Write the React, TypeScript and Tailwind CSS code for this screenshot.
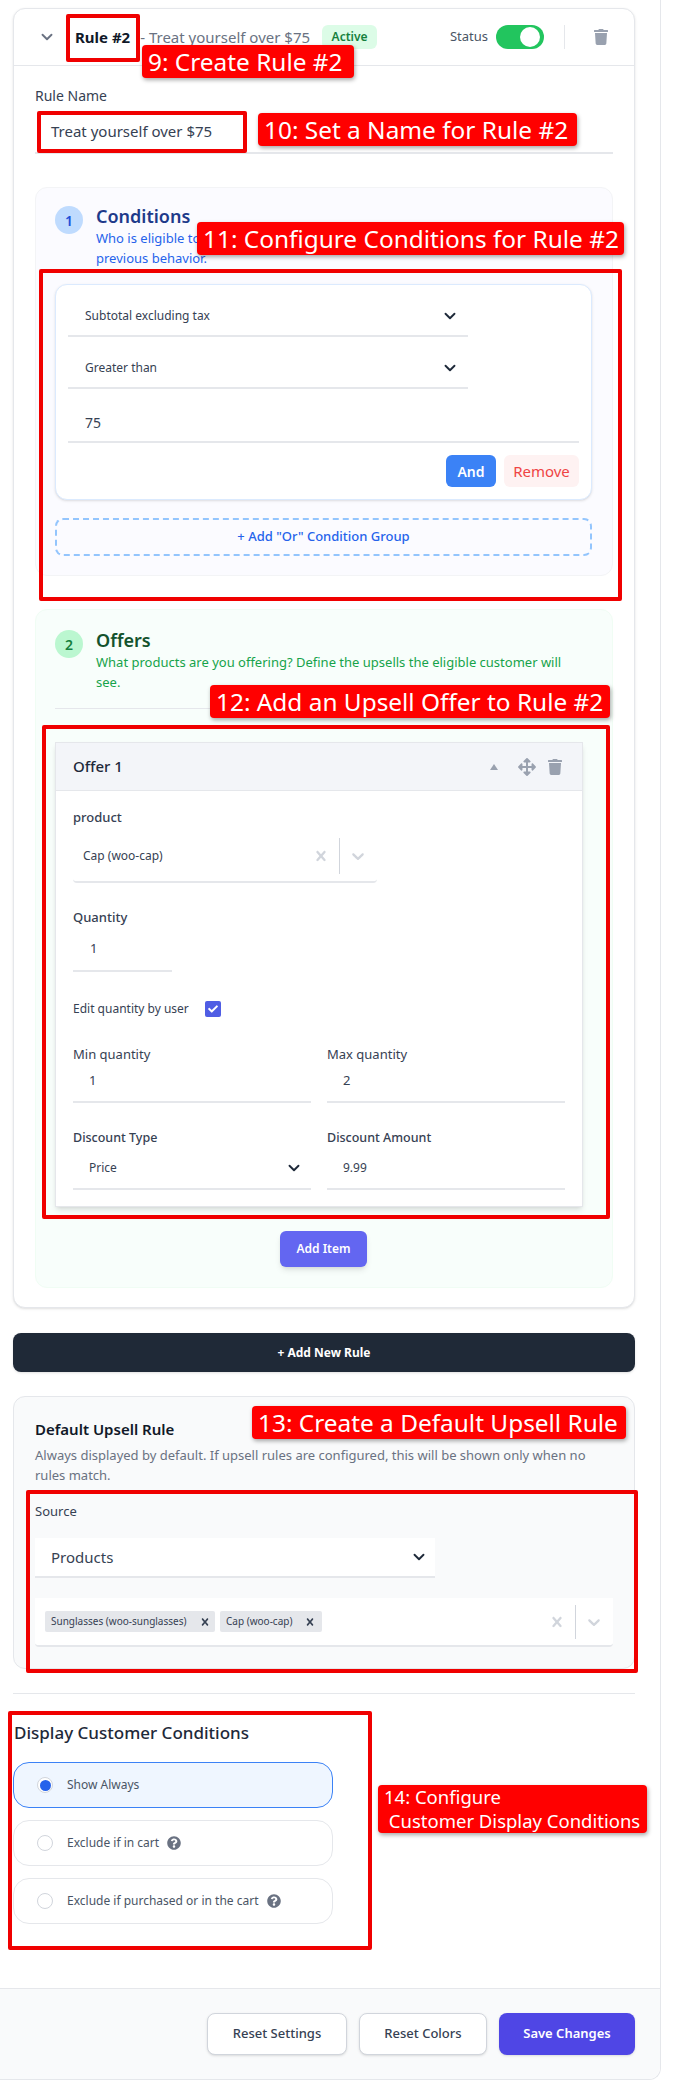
import { ChevronDown } from 'lucide-react';
import { FaArrowsAlt, FaCheck, FaQuestionCircle, FaTrash } from 'react-icons/fa';

const labelClass = 'block text-[13px] leading-5 text-gray-700';

function SelectCross({ className }: { className: string }) {
    return (
        <svg viewBox="0 0 20 20" fill="currentColor" className={className}>
            <path d="M14.348 14.849c-0.469 0.469-1.229 0.469-1.697 0l-2.651-3.030-2.651 3.029c-0.469 0.469-1.229 0.469-1.697 0-0.469-0.469-0.469-1.229 0-1.697l2.758-3.15-2.759-3.152c-0.469-0.469-0.469-1.228 0-1.697s1.228-0.469 1.697 0l2.652 3.031 2.651-3.031c0.469-0.469 1.228-0.469 1.697 0s0.469 1.229 0 1.697l-2.758 3.152 2.758 3.15c0.469 0.469 0.469 1.229 0 1.698z" />
        </svg>
    );
}

function SelectChevron({ className }: { className: string }) {
    return (
        <svg viewBox="0 0 20 20" fill="currentColor" className={className}>
            <path d="M4.516 7.548c0.436-0.446 1.043-0.481 1.576 0l3.908 3.747 3.908-3.747c0.533-0.481 1.141-0.446 1.574 0 0.436 0.445 0.408 1.197 0 1.615-0.406 0.418-4.695 4.502-4.695 4.502-0.217 0.223-0.502 0.335-0.787 0.335s-0.57-0.112-0.789-0.335c0 0-4.287-4.084-4.695-4.502s-0.436-1.17 0-1.615z" />
        </svg>
    );
}

function ConditionSelect({ text }: { text: string }) {
    return (
        <div className="flex h-10 w-[400px] items-center justify-between border-b-2 border-gray-200 pr-[9px] pl-[17px] text-[12px] text-gray-700">
            <span>{text}</span>
            <ChevronDown className="h-[18px] w-[18px] text-gray-800" strokeWidth={2.5} />
        </div>
    );
}

function Step({ n, circle, title, titleColor, desc, descColor }: { n: string; circle: string; title: string; titleColor: string; desc: string; descColor: string }) {
    return (
        <div className="flex gap-[13px]">
            <div className={`mt-[2px] flex h-7 w-7 shrink-0 items-center justify-center rounded-full text-[14px] font-semibold ${circle}`}>{n}</div>
            <div>
                <h3 className={`text-[18px] leading-6 font-semibold ${titleColor}`}>{title}</h3>
                <p className={`max-w-[480px] text-[13px] leading-5 ${descColor}`}>{desc}</p>
            </div>
        </div>
    );
}

function RadioCard({ text, active, help }: { text: string; active?: boolean; help?: boolean }) {
    return (
        <div className={`flex h-[46px] items-center rounded-2xl border pl-[23px] text-[12px] text-gray-600 ${active ? 'border-[#3b82f6] bg-[#eff6ff]' : 'border-gray-200 bg-white'}`}>
            {active ? (
                <span className="flex h-4 w-4 items-center justify-center rounded-full border border-gray-300 bg-white">
                    <span className="h-[11px] w-[11px] rounded-full bg-[#2563eb]" />
                </span>
            ) : (
                <span className="h-4 w-4 rounded-full border border-gray-300 bg-white" />
            )}
            <span className="ml-[14px]">{text}</span>
            {help && <FaQuestionCircle className="ml-2 h-[14px] w-[14px] text-gray-500" />}
        </div>
    );
}

function RedBox({ className }: { className: string }) {
    return <div className={`absolute rounded-[2px] border-4 border-[#f00000] ${className}`} />;
}

function RedLabel({ className, children }: { className: string; children: React.ReactNode }) {
    return <div className={`absolute rounded-[4px] bg-[#ff0000] pl-[6px] whitespace-pre text-white shadow-[1px_2px_4px_rgba(0,0,0,0.35)] ${className}`}>{children}</div>;
}

export default function App() {
    return (
        <div className="relative min-h-[2085px] w-[677px] bg-white font-['Noto_Sans',sans-serif]">
            <div className="w-[661px] rounded-br-xl border-r border-b border-gray-200">
                <div className="pt-2 pr-[25px] pl-[13px]">
                    {/* Rule card */}
                    <div className="rounded-xl border border-gray-200 bg-white shadow-sm">
                        <div className="flex h-[57px] items-center border-b border-gray-200 pr-[26px] pl-6">
                            <ChevronDown className="h-[18px] w-[18px] text-gray-500" strokeWidth={2.5} />
                            <span className="ml-[19px] text-[15px] font-bold text-gray-900">Rule #2</span>
                            <span className="ml-[10px] text-[15px] text-gray-500">- Treat yourself over $75</span>
                            <span className="ml-3 flex h-6 w-[55px] items-center justify-center rounded-md bg-[#dcfce7] text-[12px] font-semibold text-[#15803d]">Active</span>
                            <span className="ml-auto text-[13px] text-gray-600">Status</span>
                            <div className="ml-2 flex h-6 w-12 items-center justify-end rounded-full bg-[#22c55e] pr-1">
                                <div className="h-5 w-5 rounded-full bg-white" />
                            </div>
                            <div className="mr-[29px] ml-[20px] h-6 border-l border-gray-200" />
                            <FaTrash className="h-4 w-[14px] text-gray-400" />
                        </div>

                        <div className="px-[21px] pt-[20px] pb-[19px]">
                            <label className="block text-[14px] leading-5 text-gray-700">Rule Name</label>
                            <div className="flex h-12 w-full items-center border-b-2 border-gray-200 pt-[5px] pl-4 text-[15px] text-gray-700">Treat yourself over $75</div>

                            {/* Conditions */}
                            <section className="mt-[33px] rounded-xl border border-gray-100 bg-[#fbfbff] pt-[16px] pr-5 pb-[19px] pl-[19px]">
                                <Step
                                    n="1"
                                    circle="bg-[#bfdbfe] text-[#1d4ed8]"
                                    title="Conditions"
                                    titleColor="text-[#1e3a8a]"
                                    desc="Who is eligible to see these upsells? Target based on their cart contents or previous behavior."
                                    descColor="text-[#2563eb]"
                                />
                                <div className="mt-4 flex flex-col rounded-xl border border-[#dbeafe] bg-white px-3 py-3 shadow-sm">
                                    <ConditionSelect text="Subtotal excluding tax" />
                                    <div className="mt-3">
                                        <ConditionSelect text="Greater than" />
                                    </div>
                                    <div className="mt-[14px] flex h-10 items-center border-b-2 border-gray-200 pl-[17px] text-[14px] text-gray-700">75</div>
                                    <div className="mt-3 flex justify-end gap-2">
                                        <button className="h-8 w-[50px] rounded-md bg-[#3b82f6] text-[14px] font-semibold text-white">And</button>
                                        <button className="h-8 w-[75px] rounded-md bg-[#fef2f2] text-[15px] text-[#ef4444]">Remove</button>
                                    </div>
                                </div>
                                <button className="mt-[18px] h-[38px] w-full rounded-lg border-2 border-dashed border-[#93c5fd] text-[13px] font-medium text-[#2563eb]">+ Add "Or" Condition Group</button>
                            </section>

                            {/* Offers */}
                            <section className="mt-[33px] rounded-xl border border-[#f0fdf4] bg-[#f8fefb] pt-[18px] pr-5 pb-5 pl-[19px]">
                                <Step
                                    n="2"
                                    circle="bg-[#bbf7d0] text-[#15803d]"
                                    title="Offers"
                                    titleColor="text-[#14532d]"
                                    desc="What products are you offering? Define the upsells the eligible customer will see."
                                    descColor="text-[#16a34a]"
                                />
                                <div className="mt-4 border-t border-gray-200" />

                                <div className="mt-[33px] w-[528px] border border-gray-200 bg-white shadow-md">
                                    <div className="flex h-12 items-center border-b border-gray-200 bg-[#f3f5f9] pr-5 pl-[17px]">
                                        <span className="text-[15px] font-medium text-gray-800">Offer 1</span>
                                        <div className="ml-auto flex items-center text-gray-400">
                                            <span className="mr-[20px] h-0 w-0 border-x-[4px] border-b-[6px] border-x-transparent border-b-gray-400" />
                                            <FaArrowsAlt className="mr-[12px] h-[18px] w-[18px]" />
                                            <FaTrash className="h-4 w-[14px]" />
                                        </div>
                                    </div>
                                    <div className="px-[17px] pt-4 pb-4">
                                        <label className={`${labelClass} font-medium`}>product</label>
                                        <div className="mt-1 flex h-[52px] w-[304px] items-center rounded-b border-b-2 border-gray-200 pl-[10px] text-[12px] text-gray-700">
                                            <span>Cap (woo-cap)</span>
                                            <SelectCross className="ml-auto h-5 w-5 text-gray-300" />
                                            <div className="mx-2 h-9 border-l border-gray-300" />
                                            <SelectChevron className="mr-[9px] h-5 w-5 text-gray-300" />
                                        </div>

                                        <label className={`mt-6 ${labelClass} font-medium`}>Quantity</label>
                                        <div className="flex h-[45px] w-[99px] items-center border-b-2 border-gray-200 pl-[17px] text-[13px] text-gray-700">1</div>

                                        <div className="mt-[27px] flex h-5 items-center">
                                            <span className="text-[12px] text-gray-700">Edit quantity by user</span>
                                            <span className="ml-[16px] flex h-4 w-4 items-center justify-center rounded-[2px] bg-[#4f5de4] text-white">
                                                <FaCheck className="h-[10px] w-[10px]" />
                                            </span>
                                        </div>

                                        <div className="mt-[25px] grid grid-cols-2 gap-x-4">
                                            <div>
                                                <label className={labelClass}>Min quantity</label>
                                                <div className="flex h-[39px] items-center border-b-2 border-gray-200 pb-1 pl-4 text-[13px] text-gray-700">1</div>
                                            </div>
                                            <div>
                                                <label className={labelClass}>Max quantity</label>
                                                <div className="flex h-[39px] items-center border-b-2 border-gray-200 pb-1 pl-4 text-[13px] text-gray-700">2</div>
                                            </div>
                                        </div>

                                        <div className="mt-[25px] grid grid-cols-2 gap-x-4">
                                            <div>
                                                <label className="block text-[12.5px] leading-5 font-medium text-gray-700">Discount Type</label>
                                                <div className="flex h-[42px] items-center justify-between border-b-2 border-gray-200 pr-2 pl-4 text-[12px] text-gray-700">
                                                    <span>Price</span>
                                                    <ChevronDown className="h-[18px] w-[18px] text-gray-800" strokeWidth={2.5} />
                                                </div>
                                            </div>
                                            <div>
                                                <label className="block text-[12.5px] leading-5 font-medium text-gray-700">Discount Amount</label>
                                                <div className="flex h-[42px] items-center border-b-2 border-gray-200 pl-4 text-[12px] text-gray-700">9.99</div>
                                            </div>
                                        </div>
                                    </div>
                                </div>

                                <button className="mx-auto mt-6 block h-9 w-[87px] rounded-md bg-[#6366f1] text-[12px] font-semibold text-white shadow-md">Add Item</button>
                            </section>
                        </div>
                    </div>

                    <button className="mt-[25px] block h-[39px] w-full rounded-lg bg-[#1f2937] text-[12px] font-bold text-white shadow-sm">+ Add New Rule</button>

                    {/* Default rule */}
                    <div className="mt-6 rounded-xl border border-gray-200 bg-gray-50 px-[21px] pt-5 pb-[21px]">
                        <h3 className="text-[15px] leading-6 font-semibold text-gray-900">Default Upsell Rule</h3>
                        <p className="mt-1 text-[13px] leading-5 text-gray-500">Always displayed by default. If upsell rules are configured, this will be shown only when no rules match.</p>
                        <label className="mt-4 block text-[13px] leading-5 text-gray-700">Source</label>
                        <div className="mt-[17px] flex h-10 w-[400px] items-center justify-between border-b-2 border-gray-200 bg-white pr-[7px] pl-4 text-[15px] text-gray-700">
                            <span>Products</span>
                            <ChevronDown className="h-[18px] w-[18px] text-gray-800" strokeWidth={2.5} />
                        </div>
                        <div className="mt-5 flex h-[49px] items-center rounded-b border-b-2 border-gray-200 bg-white pr-[9px] pl-[10px]">
                            <span className="flex h-[21px] w-[170px] items-center rounded-[2px] bg-gray-200 pl-[6px] text-[10px] whitespace-nowrap text-gray-700">
                                Sunglasses (woo-sunglasses)
                                <SelectCross className="mr-[3px] ml-auto h-[14px] w-[14px] text-gray-700" />
                            </span>
                            <span className="ml-[5px] flex h-[21px] w-[102px] items-center rounded-[2px] bg-gray-200 pl-[6px] text-[10px] whitespace-nowrap text-gray-700">
                                Cap (woo-cap)
                                <SelectCross className="mr-[5px] ml-auto h-[14px] w-[14px] text-gray-700" />
                            </span>
                            <SelectCross className="ml-auto h-5 w-5 text-gray-300" />
                            <div className="mx-2 h-[34px] border-l border-gray-300" />
                            <SelectChevron className="h-5 w-5 text-gray-300" />
                        </div>
                    </div>

                    <div className="mt-6 border-t border-gray-200" />

                    {/* Display conditions */}
                    <h3 className="mt-[25px] pl-px text-[17px] leading-7 font-medium text-gray-800">Display Customer Conditions</h3>
                    <div className="mt-[15px] flex w-[320px] flex-col gap-3">
                        <RadioCard text="Show Always" active />
                        <RadioCard text="Exclude if in cart" help />
                        <RadioCard text="Exclude if purchased or in the cart" help />
                    </div>
                </div>

                <div className="mt-[64px] flex h-[91px] justify-end gap-3 rounded-br-xl border-t border-gray-200 bg-gray-50 pt-6 pr-[25px]">
                    <button className="h-[42px] w-[140px] rounded-lg border border-gray-300 bg-white text-[13px] font-medium text-gray-700 shadow-sm">Reset Settings</button>
                    <button className="h-[42px] w-[128px] rounded-lg border border-gray-300 bg-white text-[13px] font-medium text-gray-700 shadow-sm">Reset Colors</button>
                    <button className="h-[42px] w-[136px] rounded-lg bg-[#4f46e5] text-[13px] font-semibold text-white shadow-sm">Save Changes</button>
                </div>
            </div>

            {/* Tutorial annotations over the page */}
            <RedBox className="top-[14px] left-[66px] h-[48px] w-[74px]" />
            <RedBox className="top-[111px] left-[37px] h-[42px] w-[210px]" />
            <RedBox className="top-[269px] left-[39px] h-[332px] w-[583px]" />
            <RedBox className="top-[725px] left-[42px] h-[494px] w-[568px]" />
            <RedBox className="top-[1490px] left-[26px] h-[183px] w-[612px]" />
            <RedBox className="top-[1711px] left-[8px] h-[239px] w-[364px]" />

            <RedLabel className="top-[45px] left-[142px] h-[33px] w-[212px] text-[24.4px] leading-[33px]">9: Create Rule #2</RedLabel>
            <RedLabel className="top-[113px] left-[258px] h-[33px] w-[319px] text-[24.4px] leading-[33px]">10: Set a Name for Rule #2</RedLabel>
            <RedLabel className="top-[222px] left-[197px] h-[33px] w-[427px] text-[24.4px] leading-[33px]">11: Configure Conditions for Rule #2</RedLabel>
            <RedLabel className="top-[685px] left-[210px] h-[33px] w-[400px] text-[24.4px] leading-[33px]">12: Add an Upsell Offer to Rule #2</RedLabel>
            <RedLabel className="top-[1406px] left-[252px] h-[33px] w-[374px] text-[24.4px] leading-[33px]">13: Create a Default Upsell Rule</RedLabel>
            <RedLabel className="top-[1785px] left-[378px] h-[48px] w-[269px] text-[18.5px] leading-6">{'14: Configure\n Customer Display Conditions'}</RedLabel>
        </div>
    );
}
